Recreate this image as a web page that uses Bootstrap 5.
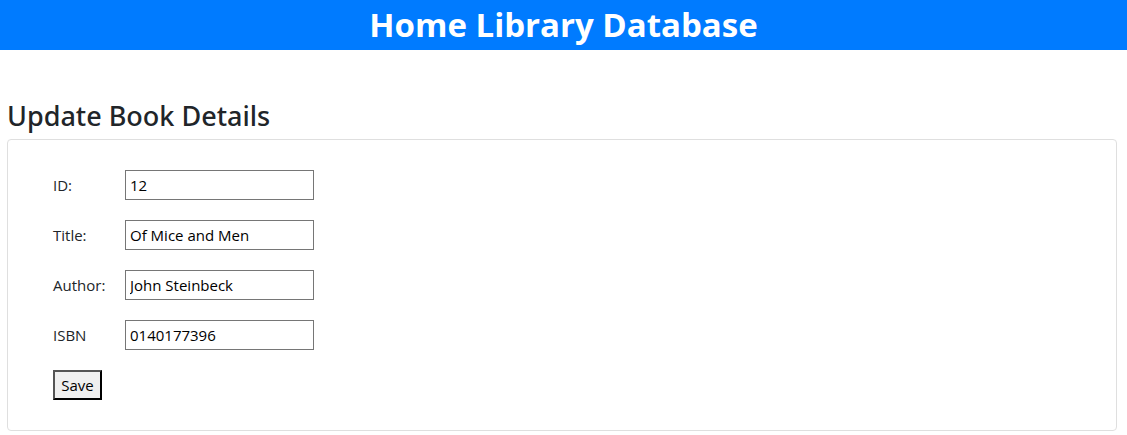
<!DOCTYPE html>
<html lang="en">
<head>
<meta charset="utf-8">
<meta name="viewport" content="width=device-width, initial-scale=1">
<title>Home Library Database</title>
<link href="https://cdn.jsdelivr.net/npm/bootstrap@5.3.0/dist/css/bootstrap.min.css" rel="stylesheet">
<style>
  body { font-family: "Segoe UI", "Open Sans", "Noto Sans", sans-serif; font-size: 15px; line-height: 24px; color: #212529; }
  .site-header { background: #007bff; margin-bottom: 49px; }
  .site-header h1 { font-size: 33px; line-height: 50px; font-weight: 700; }
  .page-area { padding: 0 10px 0 7px; }
  .page-title { font-family: "Segoe UI", "Noto Sans", sans-serif; font-size: 27px; line-height: 34px; font-weight: 500; margin-bottom: 6px; }
  .details { border-color: #dfdfdf; border-radius: 4px; padding: 30px 45px; }
  .fields { display: grid; grid-template-columns: 52px 189px; gap: 20px; }
  .fields label { padding: 3px 0; white-space: nowrap; }
  .fields input { width: 100%; border: 1px solid #767676; border-radius: 0; padding: 2px 4px; color: #000; background: #fff; }
  .save-btn { width: 49px; padding: 1px 0; border: 2px outset #000; background: #efefef; color: #000; }
</style>
</head>
<body>
<header class="site-header text-center text-white">
  <h1 class="mb-0">Home Library Database</h1>
</header>
<main class="page-area">
  <h2 class="page-title">Update Book Details</h2>
  <form class="card details">
    <div class="fields">
      <label for="bookId">ID:</label><input type="text" id="bookId" value="12">
      <label for="bookTitle">Title:</label><input type="text" id="bookTitle" value="Of Mice and Men">
      <label for="bookAuthor">Author:</label><input type="text" id="bookAuthor" value="John Steinbeck">
      <label for="bookIsbn">ISBN</label><input type="text" id="bookIsbn" value="0140177396">
      <button type="submit" class="save-btn">Save</button>
    </div>
  </form>
</main>
<script src="https://cdn.jsdelivr.net/npm/bootstrap@5.3.0/dist/js/bootstrap.bundle.min.js"></script>
</body>
</html>
